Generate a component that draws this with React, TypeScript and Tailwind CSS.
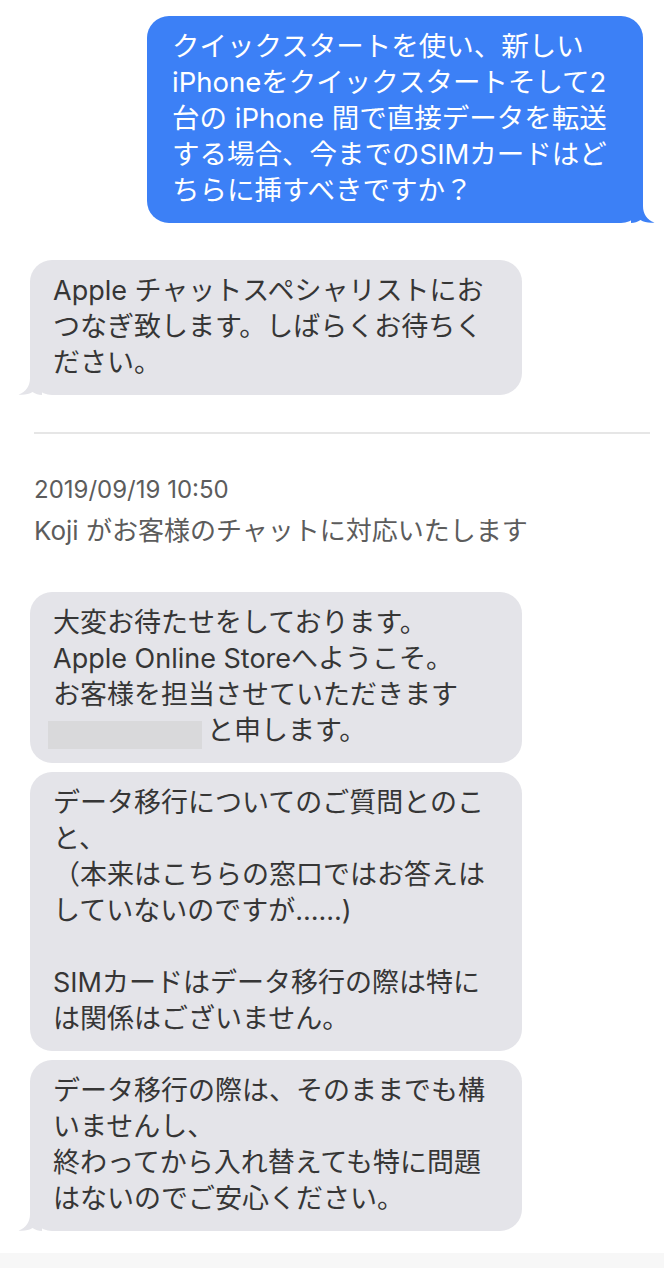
import React from 'react';

const FONT = 'font-["Inter","Noto_Sans_CJK_JP",sans-serif]';

function Tail({ color, side }: { color: string; side: 'left' | 'right' }) {
  const pos = side === 'left' ? 'left-[-12px]' : 'right-[-12px] -scale-x-100';
  return (
    <svg className={`absolute bottom-0 ${pos}`} width="24" height="30" viewBox="0 0 24 30">
      <path d="M12 0 L12 13 C12 21 8 27 0.5 29.6 C6 30.3 11 29.2 14.5 27 C17.5 29 20.5 30 24 30 L24 0 Z" fill={color} />
    </svg>
  );
}

function Lines({ lines }: { lines: React.ReactNode[] }) {
  return (
    <>
      {lines.map((l, i) => (
        <div key={i} className="whitespace-nowrap h-[36px]">
          {l}
        </div>
      ))}
    </>
  );
}

function GrayBubble({ lines, tail }: { lines: React.ReactNode[]; tail?: boolean }) {
  return (
    <div className="relative w-[492px] rounded-[22px] bg-[#e4e4e9] pl-[23px] pt-[13px] pb-[14px] text-[27px] leading-[36px] text-[#363636]">
      {tail && <Tail color="#e4e4e9" side="left" />}
      <div className="relative">
        <Lines lines={lines} />
      </div>
    </div>
  );
}

export default function App() {
  return (
    <div className={`w-[664px] min-h-[1268px] bg-white flex flex-col ${FONT}`}>
      <div className="flex justify-end pt-4 pr-[21px]">
        <div className="relative w-[496px] rounded-[22px] bg-[#3c80f6] pl-[25px] pt-[12px] pb-[15px] text-[27.5px] leading-[36px] text-white">
          <Tail color="#3c80f6" side="right" />
          <div className="relative">
            <Lines
              lines={[
                'クイックスタートを使い、新しい',
                'iPhoneをクイックスタートそして2',
                '台の iPhone 間で直接データを転送',
                'する場合、今までのSIMカードはど',
                'ちらに挿すべきですか？',
              ]}
            />
          </div>
        </div>
      </div>

      <div className="pl-[30px] mt-[37px]">
        <GrayBubble
          tail
          lines={[
            'Apple チャットスペシャリストにお',
            'つなぎ致します。しばらくお待ちく',
            'ださい。',
          ]}
        />
      </div>

      <div className="mt-[37px] ml-[34px] mr-[14px] h-[2px] bg-[#e6e6e6]" />

      <div className="ml-[34px] mt-[40px] text-[24px] leading-[32px] text-[#5c5c5c]">2019/09/19 10:50</div>
      <div className="ml-[34px] mt-[9px] text-[26px] leading-[32px] text-[#5c5c5c]">
        Koji がお客様のチャットに対応いたします
      </div>

      <div className="pl-[30px] mt-[45px] flex flex-col gap-[9px]">
        <GrayBubble
          lines={[
            '大変お待たせをしております。',
            'Apple Online Storeへようこそ。',
            'お客様を担当させていただきます',
            <>
              <span className="inline-block align-[-9px] w-[154px] h-[28px] -ml-[5px] mr-[5px] bg-[#d9d9db]" />
              と申します。
            </>,
          ]}
        />
        <GrayBubble
          lines={[
            'データ移行についてのご質問とのこ',
            'と、',
            '（本来はこちらの窓口ではお答えは',
            'していないのですが……)',
            '',
            'SIMカードはデータ移行の際は特に',
            'は関係はございません。',
          ]}
        />
        <GrayBubble
          tail
          lines={[
            'データ移行の際は、そのままでも構',
            'いませんし、',
            '終わってから入れ替えても特に問題',
            'はないのでご安心ください。',
          ]}
        />
      </div>

      <div className="mt-auto h-[15px] bg-[#f7f7f7]" />
    </div>
  );
}
